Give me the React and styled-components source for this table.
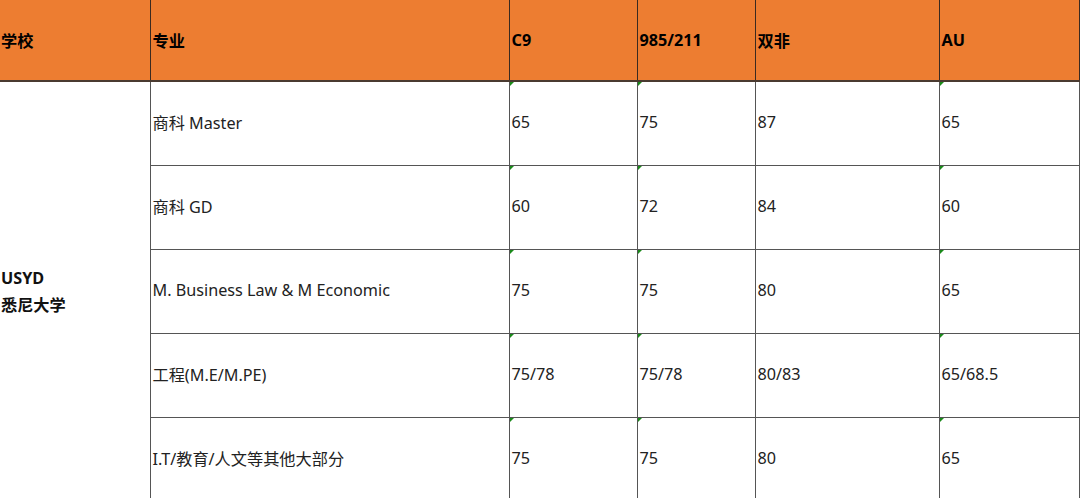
import React from "react";
import styled, { createGlobalStyle } from "styled-components";

const GlobalStyle = createGlobalStyle`
    html, body {
        margin: 0;
        padding: 0;
        background: #fff;
    }
    body {
        font-family: "Noto Sans", "Noto Sans CJK SC", sans-serif;
    }
`;

const Table = styled.table`
    width: 1079px;
    border-collapse: collapse;
    table-layout: fixed;
    font-size: 16.2px;
    color: #222;
`;

const HeadCell = styled.th`
    height: 79px;
    padding: 0 0 1px 2px;
    background: #ed7d31;
    color: #000;
    font-weight: 700;
    text-align: left;
    vertical-align: middle;
    border-left: 1px solid #3a2a20;
    border-right: 1px solid #3a2a20;
    border-bottom: 2px solid #4a3a30;
    &:first-child {
        border-left: none;
        padding-left: 1px;
    }
`;

const Cell = styled.td`
    position: relative;
    height: 80px;
    padding: 0 0 3px 2px;
    vertical-align: middle;
    border: 1px solid #555;
    border-top-color: #777;
    white-space: nowrap;

    ${({ $flag }) =>
        $flag &&
        `
        &::before {
            content: "";
            position: absolute;
            top: 0;
            left: 0;
            width: 0;
            height: 0;
            border-top: 4px solid #1a8a1a;
            border-right: 4px solid transparent;
        }
    `}
`;

const SchoolCell = styled.td`
    padding: 0 0 0 1px;
    vertical-align: middle;
    border-right: 1px solid #555;
    font-weight: 700;
    color: #111;
    line-height: 27px;
`;

const cols = [150, 359, 128, 118, 184, 140];
const heads = ["学校", "专业", "C9", "985/211", "双非", "AU"];

const rows = [
    ["商科 Master", "65", "75", "87", "65"],
    ["商科 GD", "60", "72", "84", "60"],
    ["M. Business Law & M Economic", "75", "75", "80", "65"],
    ["工程(M.E/M.PE)", "75/78", "75/78", "80/83", "65/68.5"],
    ["I.T/教育/人文等其他大部分", "75", "75", "80", "65"],
];

const flagged = [true, true, false, true];

export default function App() {
    return (
        <>
            <GlobalStyle />
            <Table>
                <colgroup>
                    {cols.map((w, i) => (
                        <col key={i} style={{ width: w }} />
                    ))}
                </colgroup>
                <thead>
                    <tr>
                        {heads.map((h) => (
                            <HeadCell key={h}>{h}</HeadCell>
                        ))}
                    </tr>
                </thead>
                <tbody>
                    {rows.map((r, i) => (
                        <tr key={i}>
                            {i === 0 && (
                                <SchoolCell rowSpan={rows.length}>
                                    USYD
                                    <br />
                                    悉尼大学
                                </SchoolCell>
                            )}
                            <Cell>{r[0]}</Cell>
                            {r.slice(1).map((v, j) => (
                                <Cell key={j} $flag={flagged[j]}>
                                    {v}
                                </Cell>
                            ))}
                        </tr>
                    ))}
                </tbody>
            </Table>
        </>
    );
}
